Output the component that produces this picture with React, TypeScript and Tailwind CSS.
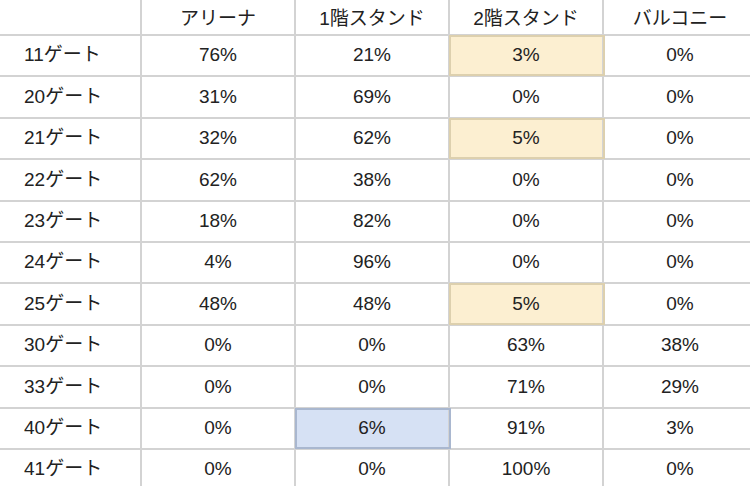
import React from 'react';

type Mark = 'yellow' | 'blue' | undefined;

interface GateRow {
  gate: string;
  values: string[];
  marks?: Mark[];
}

const columns = ['アリーナ', '1階スタンド', '2階スタンド', 'バルコニー'];

const rows: GateRow[] = [
  { gate: '11ゲート', values: ['76%', '21%', '3%', '0%'], marks: [undefined, undefined, 'yellow'] },
  { gate: '20ゲート', values: ['31%', '69%', '0%', '0%'] },
  { gate: '21ゲート', values: ['32%', '62%', '5%', '0%'], marks: [undefined, undefined, 'yellow'] },
  { gate: '22ゲート', values: ['62%', '38%', '0%', '0%'] },
  { gate: '23ゲート', values: ['18%', '82%', '0%', '0%'] },
  { gate: '24ゲート', values: ['4%', '96%', '0%', '0%'] },
  { gate: '25ゲート', values: ['48%', '48%', '5%', '0%'], marks: [undefined, undefined, 'yellow'] },
  { gate: '30ゲート', values: ['0%', '0%', '63%', '38%'] },
  { gate: '33ゲート', values: ['0%', '0%', '71%', '29%'] },
  { gate: '40ゲート', values: ['0%', '6%', '91%', '3%'], marks: [undefined, 'blue'] },
  { gate: '41ゲート', values: ['0%', '0%', '100%', '0%'] },
];

const font = { fontFamily: '"Liberation Sans", "Noto Sans CJK JP", sans-serif' };

const App: React.FC = () => {
  return (
    <div className="w-[750px] h-[486px] overflow-hidden bg-white text-[#222] text-[19px]" style={font}>
      <div className="w-[770px]">
        {/* header */}
        <div className="flex h-[36px] border-b-2 border-[#d3d3d3]">
          <div className="w-[142px] shrink-0 border-r-2 border-[#d3d3d3]" />
          {columns.map((c) => (
            <div key={c} className="w-[154px] shrink-0 flex items-center justify-center pt-[5px] border-r-2 border-[#d3d3d3]">
              {c}
            </div>
          ))}
        </div>

        {/* rows */}
        {rows.map((r) => (
          <div key={r.gate} className="flex h-[41.4px] border-b-2 border-[#d3d3d3]">
            <div className="w-[142px] shrink-0 flex items-center pl-[24px] border-r-2 border-[#d3d3d3]">
              {r.gate}
            </div>
            {r.values.map((v, i) => {
              const m = r.marks?.[i];
              const tone =
                m === 'yellow'
                  ? 'bg-[#fcefd1] outline-2 outline-[#ddd0ae] -outline-offset-1'
                  : m === 'blue'
                  ? 'bg-[#d6e1f4] outline-2 outline-[#a9b7cf] -outline-offset-1'
                  : '';
              return (
                <div
                  key={i}
                  className={`w-[154px] shrink-0 flex items-center justify-center border-r-2 border-[#d3d3d3] ${tone}`}
                >
                  {v}
                </div>
              );
            })}
          </div>
        ))}
      </div>
    </div>
  );
};

export default App;
